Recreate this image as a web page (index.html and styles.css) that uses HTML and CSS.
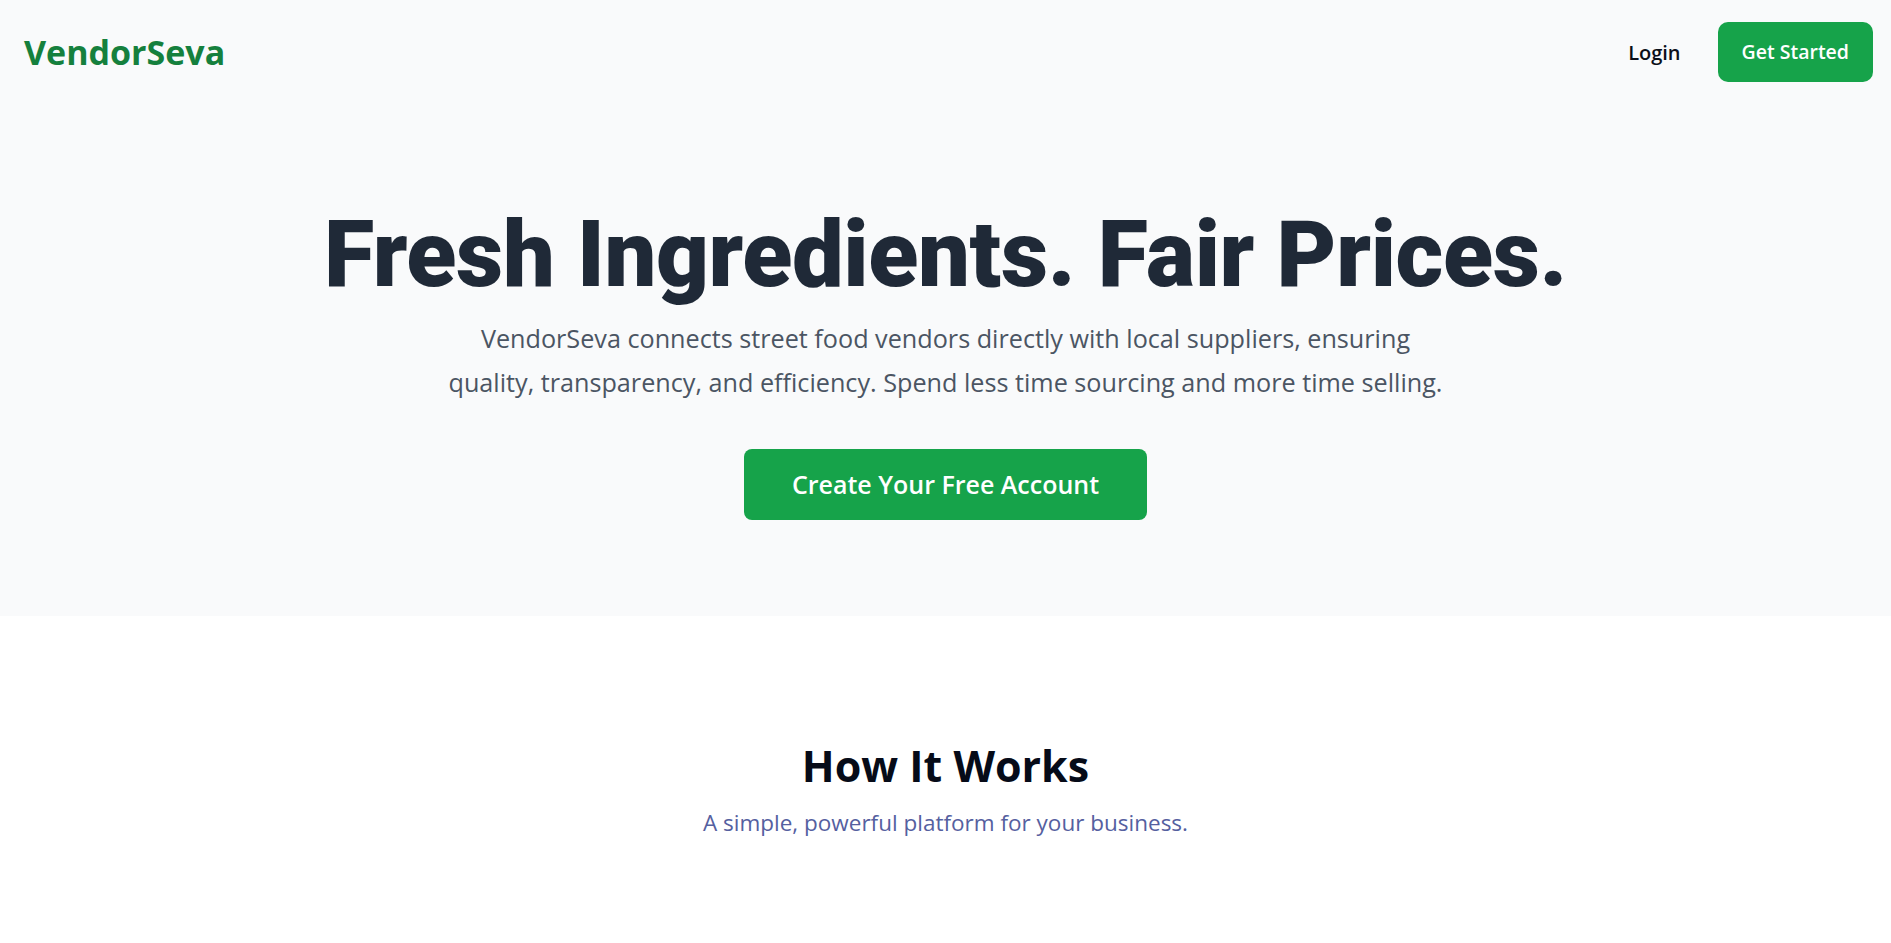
FILE: index.html
```html
<!DOCTYPE html>
<html lang="en">
<head>
<meta charset="utf-8">
<title>VendorSeva</title>
<link rel="stylesheet" href="styles.css">
</head>
<body>
  <div class="top">
    <header class="nav">
      <a class="logo" href="#">VendorSeva</a>
      <div class="nav-actions">
        <a class="login" href="#">Login</a>
        <a class="btn-start" href="#">Get Started</a>
      </div>
    </header>
    <section class="hero">
      <h1 class="hero-title">Fresh Ingredients. Fair Prices.</h1>
      <p class="hero-text">VendorSeva connects street food vendors directly with local suppliers, ensuring quality, transparency, and efficiency. Spend less time sourcing and more time selling.</p>
      <a class="btn-cta" href="#">Create Your Free Account</a>
    </section>
  </div>
  <section class="how">
    <h2 class="how-title">How It Works</h2>
    <p class="how-sub">A simple, powerful platform for your business.</p>
  </section>
</body>
</html>
```
FILE: styles.css
```css
* { box-sizing: border-box; }
html, body { margin: 0; padding: 0; }
body {
  font-family: "Open Sans", "Noto Sans", sans-serif;
  background: #ffffff;
  color: #111827;
}
a { text-decoration: none; }

.top { background: #f9fafb; }

.nav {
  display: flex;
  justify-content: space-between;
  align-items: center;
  height: 104px;
  padding: 0 18px 0 24px;
}
.logo {
  font-size: 34px;
  font-weight: 700;
  color: #15803d;
  line-height: 1;
}
.nav-actions {
  display: flex;
  align-items: center;
  gap: 37px;
}
.login {
  font-size: 20px;
  font-weight: 600;
  color: #0b0f19;
}
.btn-start {
  display: block;
  background: #16a34a;
  color: #ffffff;
  font-size: 19.5px;
  font-weight: 600;
  line-height: 30px;
  padding: 15px 24px;
  border-radius: 10px;
}

.hero {
  display: flex;
  flex-direction: column;
  align-items: center;
  text-align: center;
  padding: 105px 0 96px;
}
.hero-title {
  margin: 0;
  font-family: Roboto, Lato, "Open Sans", sans-serif;
  font-weight: 900;
  font-size: 92px;
  line-height: 92px;
  letter-spacing: -0.004em;
  color: #1f2937;
}
.hero-text {
  margin: 15px 0 0;
  max-width: 1004px;
  font-size: 25.2px;
  line-height: 44px;
  color: #4b5563;
}
.btn-cta {
  margin-top: 45px;
  display: block;
  background: #16a34a;
  color: #ffffff;
  font-size: 25px;
  font-weight: 600;
  line-height: 33px;
  padding: 19px 48px;
  border-radius: 8px;
}

.how {
  display: flex;
  flex-direction: column;
  align-items: center;
  text-align: center;
  padding: 124px 0 100px;
}
.how-title {
  margin: 0;
  font-size: 43px;
  font-weight: 700;
  line-height: 1.2;
  color: #060b18;
}
.how-sub {
  margin: 14px 0 0;
  font-size: 22.5px;
  line-height: 1.5;
  color: #55609f;
}
```
